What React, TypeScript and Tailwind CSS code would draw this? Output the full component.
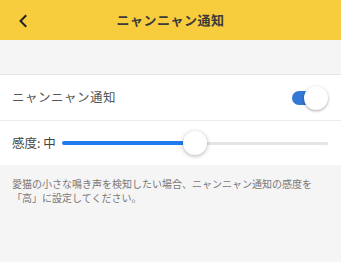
import React from "react";

export default function App() {
  const font = { fontFamily: '"Noto Sans CJK JP", "Noto Sans", sans-serif' };
  return (
    <div className="w-[341px] h-[262px] bg-[#f5f5f5] flex flex-col" style={font}>
      <div className="h-[40px] bg-[#f7cc3d] flex items-center relative shrink-0">
        <svg className="absolute left-[17px] top-[14px]" width="12" height="14" viewBox="0 0 12 14">
          <path d="M8.5 2 L3.5 7 L8.5 12" fill="none" stroke="#222" strokeWidth="2" strokeLinecap="square" />
        </svg>
        <div className="flex-1 text-center text-[13px] font-bold text-[#3a3a3a] tracking-[0.5px]">ニャンニャン通知</div>
      </div>
      <div className="h-[35px] border-b border-[#e6e6e6]" />
      <div className="bg-white">
        <div className="h-[46px] flex items-center px-3 border-b border-[#ebebeb]">
          <span className="flex-1 text-[12.5px] text-[#555] tracking-[0.5px]">ニャンニャン通知</span>
          <div className="relative w-[36px] h-[22px] mr-[1px]">
            <div className="absolute left-[0px] top-[4px] w-[30px] h-[14px] rounded-full bg-[#3378d5]" />
            <div className="absolute right-[0px] top-[-1px] w-[24px] h-[24px] rounded-full bg-white shadow-[0_1px_3px_rgba(0,0,0,0.35)]" />
          </div>
        </div>
        <div className="h-[44px] flex items-center pl-3 pr-[13px]">
          <span className="text-[12.5px] text-[#444] mr-[6px]">感度: 中</span>
          <div className="flex-1 relative h-[24px] flex items-center">
            <div className="w-full h-[3px] rounded-full bg-[#e5e5e5]" />
            <div className="absolute left-0 top-[10px] h-[4px] w-[124px] rounded-full bg-[#1f7cf0]" />
            <div className="absolute left-[121px] top-[0px] w-[24px] h-[24px] rounded-full bg-white shadow-[0_1px_4px_rgba(0,0,0,0.3)]" />
          </div>
        </div>
      </div>
      <div className="px-3 pt-[12px] text-[10px] leading-[14px] text-[#777]">
        愛猫の小さな鳴き声を検知したい場合、ニャンニャン通知の感度を<br />「高」に設定してください。
      </div>
    </div>
  );
}
